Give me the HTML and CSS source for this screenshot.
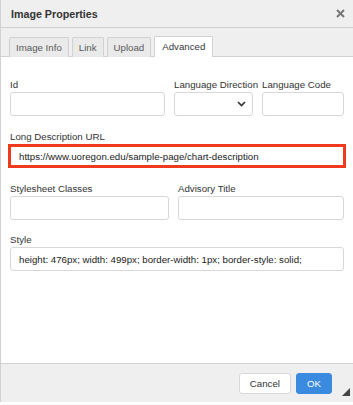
FILE: index.html
```html
<!DOCTYPE html>
<html lang="en">
<head>
    <meta charset="UTF-8">
    <meta name="viewport" content="width=device-width, initial-scale=1.0">
    <title>Image Properties</title>
    <link rel="stylesheet" href="styles.css">
</head>
<body>
    <div class="dialog">
        <div class="dialog-title">
            <span>Image Properties</span>
            <svg class="close" width="9" height="9" viewBox="0 0 9 9"><path d="M1 1 L8 8 M8 1 L1 8" stroke="#777" stroke-width="2"/></svg>
        </div>

        <div class="tabs">
            <div class="tab">Image Info</div>
            <div class="tab">Link</div>
            <div class="tab">Upload</div>
            <div class="tab active">Advanced</div>
        </div>

        <div class="contents">
            <div class="row">
                <div class="field field-id">
                    <label>Id</label>
                    <input type="text">
                </div>
                <div class="field field-dir">
                    <label>Language Direction</label>
                    <div class="select">
                        <svg width="9" height="6" viewBox="0 0 9 6"><path d="M1 1 L4.5 4.5 L8 1" fill="none" stroke="#333" stroke-width="1.7"/></svg>
                    </div>
                </div>
                <div class="field field-code">
                    <label>Language Code</label>
                    <input type="text">
                </div>
            </div>

            <div class="field field-long">
                <label>Long Description URL</label>
                <input type="text" class="highlight" value="https://www.uoregon.edu/sample-page/chart-description">
            </div>

            <div class="row">
                <div class="field field-half">
                    <label>Stylesheet Classes</label>
                    <input type="text">
                </div>
                <div class="field field-half2">
                    <label>Advisory Title</label>
                    <input type="text">
                </div>
            </div>

            <div class="field field-style">
                <label>Style</label>
                <input type="text" value="height: 476px; width: 499px; border-width: 1px; border-style: solid;">
            </div>
        </div>

        <div class="footer">
            <button class="btn">Cancel</button>
            <button class="btn btn-ok">OK</button>
            <span class="resize"></span>
        </div>
    </div>
</body>
</html>
```

FILE: styles.css
```css
body {
    margin: 0;
    font-family: "Liberation Sans", Arial, sans-serif;
    font-size: 9.7px;
    color: #333;
    background: #fff;
}

.dialog {
    width: 352px;
    height: 402px;
    border-left: 1px solid #d1d1d1;
    display: flex;
    flex-direction: column;
    background: #fff;
}

.dialog-title {
    height: 28px;
    box-sizing: border-box;
    background: #efefef;
    border-bottom: 1px solid #d1d1d1;
    display: flex;
    align-items: center;
    justify-content: space-between;
    padding: 0 8px 0 10px;
    font-weight: bold;
    font-size: 10.7px;
    color: #333;
}

.tabs {
    height: 29px;
    box-sizing: border-box;
    background: #efefef;
    border-bottom: 1px solid #d1d1d1;
    display: flex;
    align-items: flex-end;
    gap: 3px;
    padding-left: 8px;
}

.tab {
    height: 20px;
    box-sizing: border-box;
    padding: 0 6px;
    border: 1px solid #d1d1d1;
    border-bottom: none;
    border-radius: 2px 2px 0 0;
    background: #eaeaea;
    color: #595959;
    line-height: 19px;
    margin-bottom: -1px;
}

.tab.active {
    background: #fff;
    color: #383838;
    height: 21px;
    padding: 0 7px;
    line-height: 20px;
}

.contents {
    flex: 1;
    padding: 22px 9px 0 9px;
}

.row {
    display: flex;
    gap: 9px;
}

.field {
    display: flex;
    flex-direction: column;
}

.field label {
    height: 12px;
    line-height: 12px;
    margin-bottom: 1px;
    white-space: nowrap;
}

.field input,
.select {
    height: 24px;
    box-sizing: border-box;
    border: 1px solid #d8d8d8;
    border-radius: 3px;
    font-family: "Liberation Sans", Arial, sans-serif;
    font-size: 9.7px;
    color: #222;
    padding: 0 8px;
    outline: none;
    background: #fff;
}

.field-id {
    width: 156px;
}

.field-dir {
    width: 79px;
}

.field-code {
    width: 82px;
}

.select {
    display: flex;
    align-items: center;
    justify-content: flex-end;
    padding-right: 6px;
}

.field-long {
    margin: 15px -2px 0 -2px;
}

.field-long label {
    margin-left: 2px;
}

.field-long input.highlight {
    border: 3px solid #f03a1e;
    border-radius: 0;
    padding: 0 8px;
}

.field-long + .row {
    margin-top: 15px;
}

.field-half {
    width: 159px;
}

.field-half2 {
    flex: 1;
}

.field-style {
    margin-top: 14px;
}

.footer {
    height: 38px;
    background: #efefef;
    border-top: 1px solid #d1d1d1;
    display: flex;
    align-items: center;
    justify-content: flex-end;
    padding-right: 21px;
    gap: 5px;
    position: relative;
}

.btn {
    height: 21px;
    box-sizing: border-box;
    border: 1px solid #d8d8d8;
    border-radius: 3px;
    background: #fff;
    font-family: "Liberation Sans", Arial, sans-serif;
    font-size: 9.7px;
    color: #333;
    padding: 0 10px;
}

.btn-ok {
    background: #3a8ae0;
    border-color: #3a8ae0;
    color: #fff;
    padding: 0 10px;
}

.resize {
    position: absolute;
    right: 3px;
    bottom: 6px;
    width: 0;
    height: 0;
    border-left: 8px solid transparent;
    border-bottom: 8px solid #444;
}
```
